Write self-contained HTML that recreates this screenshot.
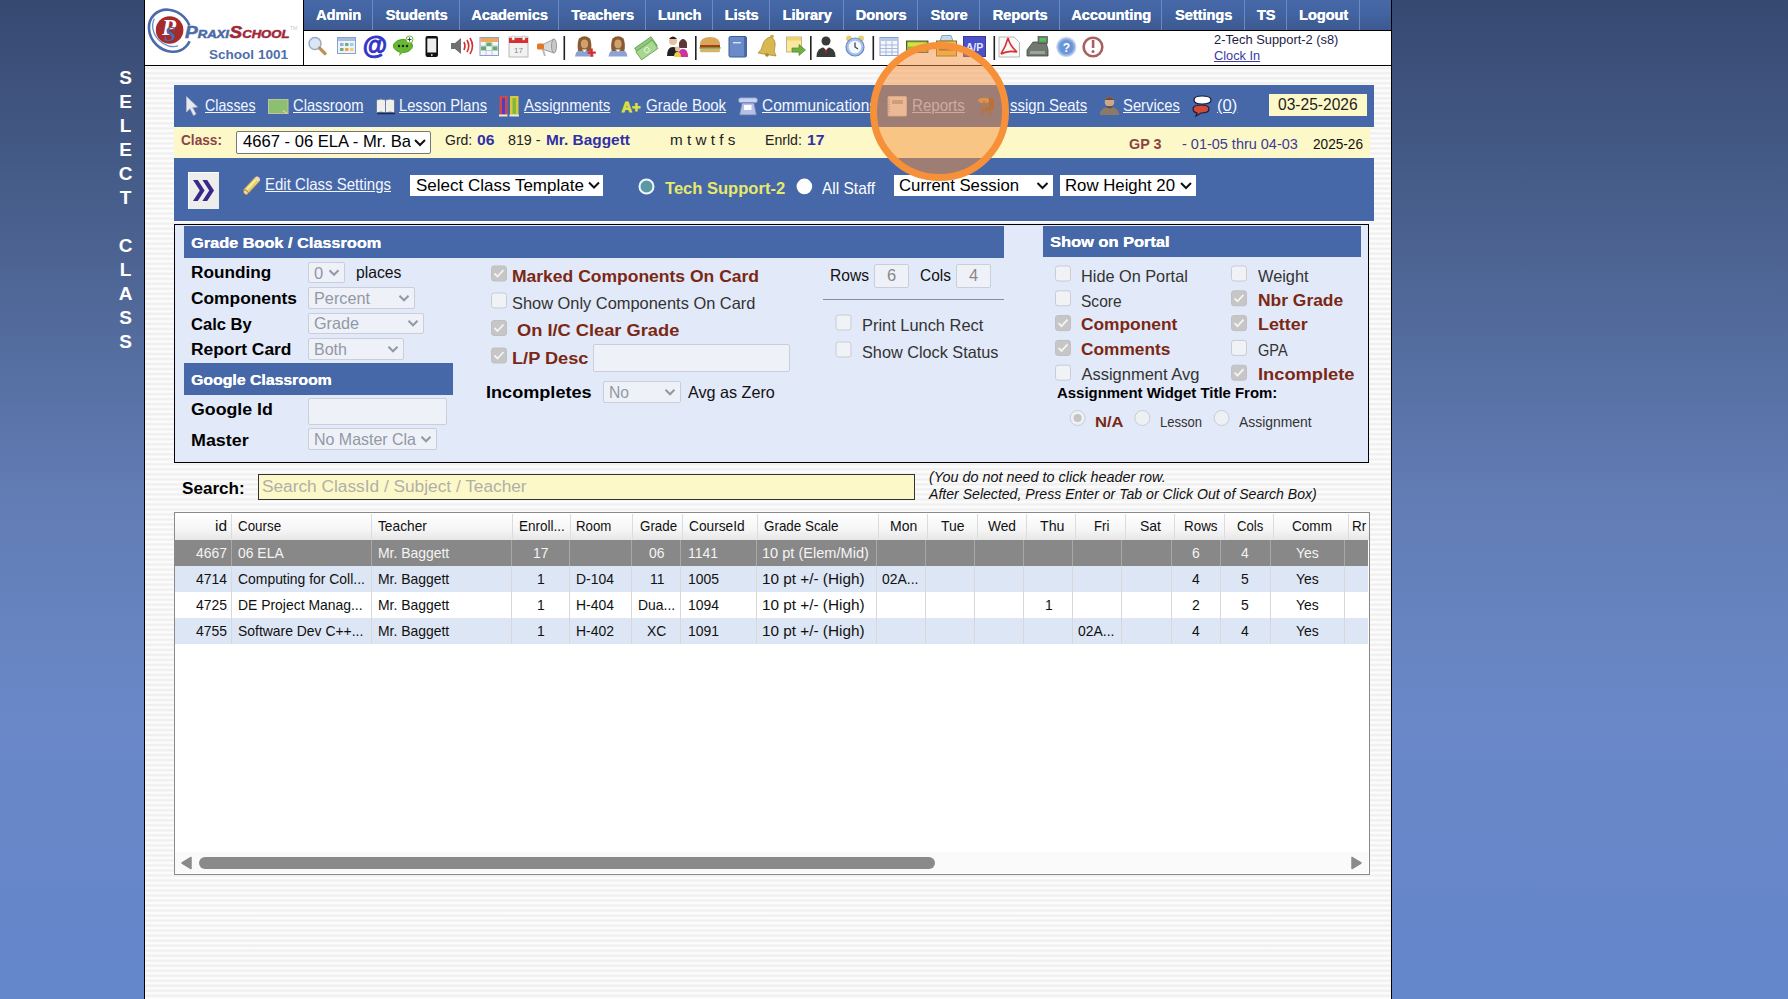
<!DOCTYPE html><html><head><meta charset="utf-8"><style>
*{box-sizing:border-box}
html,body{margin:0;padding:0}
body{width:1788px;height:999px;overflow:hidden;position:relative;font-family:"Liberation Sans",sans-serif;
 background:linear-gradient(to bottom,#364971 0%,#506898 30%,#627db5 50%,#6a88c8 72%,#6486cb 100%);}
.a{position:absolute}
.t{position:absolute;white-space:nowrap;line-height:1;transform-origin:0 0}
svg{position:absolute;left:0;top:0;overflow:visible}
</style></head><body>
<div class="a" style="left:144px;top:0px;width:1248px;height:999px;border-left:1px solid #000;border-right:1px solid #000;background:repeating-linear-gradient(to bottom,#fcfcfc 0px,#fcfcfc 1.01px,#f0f0f0 2.52px,#f0f0f0 3.52px,#fcfcfc 5.014px)"></div>
<div class="t" style="left:119.16px;top:67.92px;font-size:19px;color:#fff;font-weight:bold;">S</div>
<div class="t" style="left:119.16px;top:91.92px;font-size:19px;color:#fff;font-weight:bold;">E</div>
<div class="t" style="left:119.70px;top:115.92px;font-size:19px;color:#fff;font-weight:bold;">L</div>
<div class="t" style="left:119.16px;top:139.92px;font-size:19px;color:#fff;font-weight:bold;">E</div>
<div class="t" style="left:118.64px;top:163.92px;font-size:19px;color:#fff;font-weight:bold;">C</div>
<div class="t" style="left:119.70px;top:187.92px;font-size:19px;color:#fff;font-weight:bold;">T</div>
<div class="t" style="left:118.64px;top:235.92px;font-size:19px;color:#fff;font-weight:bold;">C</div>
<div class="t" style="left:119.70px;top:259.92px;font-size:19px;color:#fff;font-weight:bold;">L</div>
<div class="t" style="left:118.64px;top:283.92px;font-size:19px;color:#fff;font-weight:bold;">A</div>
<div class="t" style="left:119.16px;top:307.92px;font-size:19px;color:#fff;font-weight:bold;">S</div>
<div class="t" style="left:119.16px;top:331.92px;font-size:19px;color:#fff;font-weight:bold;">S</div>
<div class="a" style="left:145px;top:0px;width:1246px;height:65px;background:#fff"></div>
<div class="a" style="left:145px;top:65px;width:1246px;height:1px;background:#000"></div>
<div class="a" style="left:303px;top:0px;width:1px;height:65px;background:#000"></div>
<div class="a" style="left:304px;top:0px;width:1087px;height:30px;background:linear-gradient(to bottom,#4869a8 0%,#4263a0 50%,#3c598f 100%)"></div>
<div class="a" style="left:304px;top:30px;width:1087px;height:1px;background:#000"></div>
<div class="a" style="left:372px;top:0px;width:1px;height:30px;background:#6a8ac2"></div>
<div class="t" style="left:315.95px;top:7.73px;font-size:14.5px;color:#fff;font-weight:bold;text-shadow:0.4px 0 0 #fff;">Admin</div>
<div class="a" style="left:459px;top:0px;width:1px;height:30px;background:#6a8ac2"></div>
<div class="t" style="left:385.49px;top:7.73px;font-size:14.5px;color:#fff;font-weight:bold;text-shadow:0.4px 0 0 #fff;">Students</div>
<div class="a" style="left:558px;top:0px;width:1px;height:30px;background:#6a8ac2"></div>
<div class="t" style="left:471.21px;top:7.73px;font-size:14.5px;color:#fff;font-weight:bold;text-shadow:0.4px 0 0 #fff;">Academics</div>
<div class="a" style="left:645px;top:0px;width:1px;height:30px;background:#6a8ac2"></div>
<div class="t" style="left:571.20px;top:7.73px;font-size:14.5px;color:#fff;font-weight:bold;text-shadow:0.4px 0 0 #fff;">Teachers</div>
<div class="a" style="left:712px;top:0px;width:1px;height:30px;background:#6a8ac2"></div>
<div class="t" style="left:657.75px;top:7.73px;font-size:14.5px;color:#fff;font-weight:bold;text-shadow:0.4px 0 0 #fff;">Lunch</div>
<div class="a" style="left:769px;top:0px;width:1px;height:30px;background:#6a8ac2"></div>
<div class="t" style="left:724.58px;top:7.73px;font-size:14.5px;color:#fff;font-weight:bold;text-shadow:0.4px 0 0 #fff;">Lists</div>
<div class="a" style="left:843px;top:0px;width:1px;height:30px;background:#6a8ac2"></div>
<div class="t" style="left:782.42px;top:7.73px;font-size:14.5px;color:#fff;font-weight:bold;text-shadow:0.4px 0 0 #fff;">Library</div>
<div class="a" style="left:917px;top:0px;width:1px;height:30px;background:#6a8ac2"></div>
<div class="t" style="left:855.62px;top:7.73px;font-size:14.5px;color:#fff;font-weight:bold;text-shadow:0.4px 0 0 #fff;">Donors</div>
<div class="a" style="left:979px;top:0px;width:1px;height:30px;background:#6a8ac2"></div>
<div class="t" style="left:930.47px;top:7.73px;font-size:14.5px;color:#fff;font-weight:bold;text-shadow:0.4px 0 0 #fff;">Store</div>
<div class="a" style="left:1059px;top:0px;width:1px;height:30px;background:#6a8ac2"></div>
<div class="t" style="left:992.61px;top:7.73px;font-size:14.5px;color:#fff;font-weight:bold;text-shadow:0.4px 0 0 #fff;">Reports</div>
<div class="a" style="left:1161px;top:0px;width:1px;height:30px;background:#6a8ac2"></div>
<div class="t" style="left:1071.13px;top:7.73px;font-size:14.5px;color:#fff;font-weight:bold;text-shadow:0.4px 0 0 #fff;">Accounting</div>
<div class="a" style="left:1244px;top:0px;width:1px;height:30px;background:#6a8ac2"></div>
<div class="t" style="left:1174.90px;top:7.73px;font-size:14.5px;color:#fff;font-weight:bold;text-shadow:0.4px 0 0 #fff;">Settings</div>
<div class="a" style="left:1286px;top:0px;width:1px;height:30px;background:#6a8ac2"></div>
<div class="t" style="left:1256.74px;top:7.73px;font-size:14.5px;color:#fff;font-weight:bold;text-shadow:0.4px 0 0 #fff;">TS</div>
<div class="a" style="left:1359px;top:0px;width:1px;height:30px;background:#6a8ac2"></div>
<div class="t" style="left:1298.94px;top:7.73px;font-size:14.5px;color:#fff;font-weight:bold;text-shadow:0.4px 0 0 #fff;">Logout</div>
<div class="t" style="left:1214.30px;top:34.32px;font-size:12.5px;color:#1c1c48;transform:scaleX(1.0291);">2-Tech Support-2 (s8)</div>
<div class="t" style="left:1214.30px;top:49.72px;font-size:12.5px;color:#3a3aa0;transform:scaleX(1.0210);text-decoration:underline;">Clock In</div>
<div class="a" style="left:174px;top:85px;width:1200px;height:42px;background:#4668a8"></div>
<div class="t" style="left:205.20px;top:96.53px;font-size:16.5px;color:#f2f6ff;transform:scaleX(0.8605);text-decoration:underline;">Classes</div>
<div class="t" style="left:292.60px;top:96.53px;font-size:16.5px;color:#f2f6ff;transform:scaleX(0.8928);text-decoration:underline;">Classroom</div>
<div class="t" style="left:399.30px;top:96.53px;font-size:16.5px;color:#f2f6ff;transform:scaleX(0.8883);text-decoration:underline;">Lesson Plans</div>
<div class="t" style="left:523.50px;top:96.53px;font-size:16.5px;color:#f2f6ff;transform:scaleX(0.9136);text-decoration:underline;">Assignments</div>
<div class="t" style="left:646.20px;top:96.53px;font-size:16.5px;color:#f2f6ff;transform:scaleX(0.9097);text-decoration:underline;">Grade Book</div>
<div class="t" style="left:762.00px;top:96.53px;font-size:16.5px;color:#f2f6ff;transform:scaleX(0.9359);text-decoration:underline;">Communications</div>
<div class="t" style="left:1010.30px;top:96.53px;font-size:16.5px;color:#f2f6ff;transform:scaleX(0.9039);text-decoration:underline;">ssign Seats</div>
<div class="t" style="left:1123.20px;top:96.53px;font-size:16.5px;color:#f2f6ff;transform:scaleX(0.8978);text-decoration:underline;">Services</div>
<div class="t" style="left:1216.50px;top:96.53px;font-size:16.5px;color:#f2f6ff;transform:scaleX(1.0066);text-decoration:underline;">(0)</div>
<div class="t" style="left:911.70px;top:96.53px;font-size:16.5px;color:#a8c4f8;transform:scaleX(0.9139);text-decoration:underline;">Reports</div>
<div class="a" style="left:1269px;top:94px;width:98px;height:22px;background:#fdf8c8"></div>
<div class="t" style="left:1278.00px;top:95.93px;font-size:16.5px;color:#222;transform:scaleX(0.9431);">03-25-2026</div>
<div class="a" style="left:174px;top:127px;width:1196px;height:31px;background:#fdf8c8"></div>
<div class="t" style="left:181.30px;top:132.85px;font-size:14px;color:#8b4444;font-weight:bold;transform:scaleX(0.9757);">Class:</div>
<div class="a" style="left:236px;top:131px;width:195px;height:23px;background:#fff;border:1px solid #777;border-radius:2px"></div>
<div class="t" style="left:243.00px;top:133.41px;font-size:17px;color:#000;transform:scaleX(0.9768);overflow:hidden;">4667 - 06 ELA - Mr. Ba</div>
<div class="t" style="left:444.60px;top:132.73px;font-size:14.5px;color:#222;transform:scaleX(0.9645);">Grd:</div>
<div class="t" style="left:476.50px;top:132.73px;font-size:14.5px;color:#3030a8;font-weight:bold;transform:scaleX(1.0788);">06</div>
<div class="t" style="left:508.20px;top:132.73px;font-size:14.5px;color:#222;transform:scaleX(0.9834);">819 -</div>
<div class="t" style="left:545.80px;top:132.73px;font-size:14.5px;color:#3030a8;font-weight:bold;transform:scaleX(1.0627);">Mr. Baggett</div>
<div class="t" style="left:669.60px;top:132.73px;font-size:14.5px;color:#222;transform:scaleX(1.0527);">m t w t f s</div>
<div class="t" style="left:765.40px;top:132.73px;font-size:14.5px;color:#222;transform:scaleX(0.9742);">Enrld:</div>
<div class="t" style="left:807.00px;top:132.73px;font-size:14.5px;color:#3030a8;font-weight:bold;transform:scaleX(1.0912);">17</div>
<div class="t" style="left:1129.00px;top:136.53px;font-size:14.5px;color:#8b4444;font-weight:bold;transform:scaleX(0.9884);">GP 3</div>
<div class="t" style="left:1182.20px;top:136.53px;font-size:14.5px;color:#3a3a9a;transform:scaleX(0.9977);">- 01-05 thru 04-03</div>
<div class="t" style="left:1313.00px;top:136.53px;font-size:14.5px;color:#111;transform:scaleX(0.9396);">2025-26</div>
<div class="a" style="left:174px;top:158px;width:1200px;height:63px;background:#4668a8"></div>
<div class="a" style="left:188px;top:172px;width:31px;height:37px;background:#ededeb;border-top:1px solid #fafcff;border-left:1px solid #fafcff"></div>
<div class="t" style="left:265.00px;top:176.03px;font-size:16.5px;color:#f2f6ff;transform:scaleX(0.9099);text-decoration:underline;">Edit Class Settings</div>
<div class="a" style="left:410px;top:175px;width:193px;height:21px;background:#fff"></div>
<div class="t" style="left:416.00px;top:176.61px;font-size:17px;color:#000;">Select Class Template</div>
<div class="t" style="left:664.60px;top:180.21px;font-size:17px;color:#e8e86c;font-weight:bold;transform:scaleX(0.9732);">Tech Support-2</div>
<div class="t" style="left:821.90px;top:180.21px;font-size:17px;color:#fff;transform:scaleX(0.9112);">All Staff</div>
<div class="a" style="left:894px;top:175px;width:159px;height:21px;background:#fff"></div>
<div class="t" style="left:899.40px;top:177.11px;font-size:17px;color:#000;transform:scaleX(0.9845);">Current Session</div>
<div class="a" style="left:1060px;top:175px;width:136px;height:21px;background:#fff"></div>
<div class="t" style="left:1065.40px;top:177.11px;font-size:17px;color:#000;transform:scaleX(0.9865);">Row Height 20</div>
<div class="a" style="left:174px;top:224px;width:1195px;height:239px;border:1px solid #000;background:#e2e9f8"></div>
<div class="a" style="left:184px;top:226px;width:820px;height:32px;background:#4668a8"></div>
<div class="t" style="left:191.00px;top:235.38px;font-size:15.5px;color:#fff;font-weight:bold;transform:scaleX(1.0509);text-shadow:0.3px 0 0 #fff;">Grade Book / Classroom</div>
<div class="a" style="left:1043px;top:226px;width:318px;height:31px;background:#4668a8"></div>
<div class="t" style="left:1049.60px;top:234.38px;font-size:15.5px;color:#fff;font-weight:bold;transform:scaleX(1.0584);text-shadow:0.3px 0 0 #fff;">Show on Portal</div>
<div class="a" style="left:184px;top:363px;width:269px;height:32px;background:#4668a8"></div>
<div class="t" style="left:191.00px;top:372.38px;font-size:15.5px;color:#fff;font-weight:bold;transform:scaleX(1.0203);text-shadow:0.3px 0 0 #fff;">Google Classroom</div>
<div class="t" style="left:191.40px;top:265.26px;font-size:16px;color:#000;font-weight:bold;transform:scaleX(1.0745);">Rounding</div>
<div class="t" style="left:191.40px;top:291.06px;font-size:16px;color:#000;font-weight:bold;transform:scaleX(1.0841);">Components</div>
<div class="t" style="left:191.40px;top:316.76px;font-size:16px;color:#000;font-weight:bold;transform:scaleX(1.0359);">Calc By</div>
<div class="t" style="left:191.40px;top:341.86px;font-size:16px;color:#000;font-weight:bold;transform:scaleX(1.0870);">Report Card</div>
<div class="t" style="left:191.40px;top:402.26px;font-size:16px;color:#000;font-weight:bold;transform:scaleX(1.1102);">Google Id</div>
<div class="t" style="left:191.40px;top:432.56px;font-size:16px;color:#000;font-weight:bold;transform:scaleX(1.1167);">Master</div>
<div class="a" style="left:308px;top:262px;width:37px;height:21px;background:#eef1f8;border:1px solid #c9ceda;border-radius:2px"></div>
<div class="t" style="left:314.00px;top:264.53px;font-size:16.5px;color:#9298a6;">0</div>
<div class="t" style="left:356.00px;top:263.73px;font-size:16.5px;color:#111;transform:scaleX(0.9519);">places</div>
<div class="a" style="left:308px;top:287px;width:107px;height:22px;background:#eef1f8;border:1px solid #c9ceda;border-radius:2px"></div>
<div class="t" style="left:314.00px;top:289.83px;font-size:16.5px;color:#9298a6;transform:scaleX(0.9848);">Percent</div>
<div class="a" style="left:308px;top:313px;width:116px;height:21px;background:#eef1f8;border:1px solid #c9ceda;border-radius:2px"></div>
<div class="t" style="left:314.00px;top:315.03px;font-size:16.5px;color:#9298a6;transform:scaleX(0.9813);">Grade</div>
<div class="a" style="left:308px;top:338px;width:96px;height:22px;background:#eef1f8;border:1px solid #c9ceda;border-radius:2px"></div>
<div class="t" style="left:314.00px;top:340.53px;font-size:16.5px;color:#9298a6;transform:scaleX(0.9722);">Both</div>
<div class="a" style="left:308px;top:398px;width:139px;height:27px;background:#eef1f8;border:1px solid #c9ceda;border-radius:2px"></div>
<div class="a" style="left:308px;top:428px;width:129px;height:22px;background:#eef1f8;border:1px solid #c9ceda;border-radius:2px"></div>
<div class="t" style="left:314.00px;top:430.53px;font-size:16.5px;color:#9298a6;transform:scaleX(0.9673);">No Master Cla</div>
<div class="t" style="left:512.20px;top:269.06px;font-size:16px;color:#7a2814;font-weight:bold;transform:scaleX(1.0939);">Marked Components On Card</div>
<div class="t" style="left:511.90px;top:295.13px;font-size:16.5px;color:#333;transform:scaleX(0.9940);">Show Only Components On Card</div>
<div class="t" style="left:516.70px;top:322.76px;font-size:16px;color:#7a2814;font-weight:bold;transform:scaleX(1.1408);">On I/C Clear Grade</div>
<div class="t" style="left:511.90px;top:350.86px;font-size:16px;color:#7a2814;font-weight:bold;transform:scaleX(1.1353);">L/P Desc</div>
<div class="a" style="left:593px;top:344px;width:197px;height:28px;background:#eef1f8;border:1px solid #c9ceda;border-radius:2px"></div>
<div class="t" style="left:486.30px;top:385.26px;font-size:16px;color:#000;font-weight:bold;transform:scaleX(1.1311);">Incompletes</div>
<div class="a" style="left:603px;top:381px;width:78px;height:22px;background:#eef1f8;border:1px solid #c9ceda;border-radius:2px"></div>
<div class="t" style="left:609.00px;top:384.03px;font-size:16.5px;color:#9298a6;transform:scaleX(0.9482);">No</div>
<div class="t" style="left:687.60px;top:384.03px;font-size:16.5px;color:#111;transform:scaleX(0.9791);">Avg as Zero</div>
<div class="t" style="left:830.00px;top:266.63px;font-size:16.5px;color:#111;transform:scaleX(0.9477);">Rows</div>
<div class="a" style="left:874px;top:264px;width:35px;height:24px;background:#eef1f8;border:1px solid #c9ceda;border-radius:2px"></div>
<div class="t" style="left:886.91px;top:267.03px;font-size:16.5px;color:#888;">6</div>
<div class="t" style="left:920.00px;top:266.63px;font-size:16.5px;color:#111;transform:scaleX(0.9361);">Cols</div>
<div class="a" style="left:956px;top:264px;width:35px;height:24px;background:#eef1f8;border:1px solid #c9ceda;border-radius:2px"></div>
<div class="t" style="left:968.91px;top:267.03px;font-size:16.5px;color:#888;">4</div>
<div class="a" style="left:823px;top:299px;width:181px;height:1px;background:#8a8f99"></div>
<div class="t" style="left:861.60px;top:317.03px;font-size:16.5px;color:#333;transform:scaleX(0.9944);">Print Lunch Rect</div>
<div class="t" style="left:861.60px;top:343.73px;font-size:16.5px;color:#333;transform:scaleX(0.9850);">Show Clock Status</div>
<div class="t" style="left:1081.40px;top:268.03px;font-size:16.5px;color:#333;transform:scaleX(0.9869);">Hide On Portal</div>
<div class="t" style="left:1081.40px;top:293.03px;font-size:16.5px;color:#333;transform:scaleX(0.9419);">Score</div>
<div class="t" style="left:1081.40px;top:317.06px;font-size:16px;color:#7a2814;font-weight:bold;transform:scaleX(1.0835);">Component</div>
<div class="t" style="left:1081.40px;top:342.16px;font-size:16px;color:#7a2814;font-weight:bold;transform:scaleX(1.0801);">Comments</div>
<div class="t" style="left:1081.40px;top:366.23px;font-size:16.5px;color:#333;">Assignment Avg</div>
<div class="t" style="left:1257.80px;top:268.03px;font-size:16.5px;color:#333;transform:scaleX(0.9911);">Weight</div>
<div class="t" style="left:1257.80px;top:293.46px;font-size:16px;color:#7a2814;font-weight:bold;transform:scaleX(1.0889);">Nbr Grade</div>
<div class="t" style="left:1257.80px;top:317.06px;font-size:16px;color:#7a2814;font-weight:bold;transform:scaleX(1.1158);">Letter</div>
<div class="t" style="left:1257.80px;top:341.73px;font-size:16.5px;color:#333;transform:scaleX(0.8804);">GPA</div>
<div class="t" style="left:1257.80px;top:366.66px;font-size:16px;color:#7a2814;font-weight:bold;transform:scaleX(1.1414);">Incomplete</div>
<div class="t" style="left:1057.00px;top:386.35px;font-size:14px;color:#000;font-weight:bold;transform:scaleX(1.0668);">Assignment Widget Title From:</div>
<div class="t" style="left:1094.60px;top:414.65px;font-size:14px;color:#7a2814;font-weight:bold;transform:scaleX(1.1862);">N/A</div>
<div class="t" style="left:1160.20px;top:414.65px;font-size:14px;color:#333;transform:scaleX(0.9326);">Lesson</div>
<div class="t" style="left:1239.00px;top:414.65px;font-size:14px;color:#333;transform:scaleX(0.9925);">Assignment</div>
<div class="t" style="left:181.80px;top:479.63px;font-size:16.5px;color:#000;font-weight:bold;transform:scaleX(1.0359);">Search:</div>
<div class="a" style="left:258px;top:474px;width:657px;height:26px;background:#fdf8c8;border:1px solid #333"></div>
<div class="t" style="left:262.40px;top:479.26px;font-size:16px;color:#b0b0a8;transform:scaleX(1.0793);">Search ClassId / Subject / Teacher</div>
<div class="t" style="left:929.00px;top:469.83px;font-size:14.5px;color:#111;font-style:italic;transform:scaleX(0.9920);">(You do not need to click header row.</div>
<div class="t" style="left:929.00px;top:486.73px;font-size:14.5px;color:#111;font-style:italic;transform:scaleX(0.9712);">After Selected, Press Enter or Tab or Click Out of Search Box)</div>
<div class="a" style="left:174px;top:512px;width:1196px;height:363px;border:1px solid #8a8a8a;background:#fff"></div>
<div class="a" style="left:175px;top:513px;width:1194px;height:27px;background:linear-gradient(to bottom,#ffffff 0%,#f6f6f6 60%,#e6e6e6 100%)"></div>
<div class="a" style="left:231px;top:514px;width:1px;height:25px;background:#dcdcdc"></div>
<div class="a" style="left:371px;top:514px;width:1px;height:25px;background:#dcdcdc"></div>
<div class="a" style="left:512px;top:514px;width:1px;height:25px;background:#dcdcdc"></div>
<div class="a" style="left:570px;top:514px;width:1px;height:25px;background:#dcdcdc"></div>
<div class="a" style="left:632px;top:514px;width:1px;height:25px;background:#dcdcdc"></div>
<div class="a" style="left:682px;top:514px;width:1px;height:25px;background:#dcdcdc"></div>
<div class="a" style="left:757px;top:514px;width:1px;height:25px;background:#dcdcdc"></div>
<div class="a" style="left:878px;top:514px;width:1px;height:25px;background:#dcdcdc"></div>
<div class="a" style="left:927px;top:514px;width:1px;height:25px;background:#dcdcdc"></div>
<div class="a" style="left:977px;top:514px;width:1px;height:25px;background:#dcdcdc"></div>
<div class="a" style="left:1026px;top:514px;width:1px;height:25px;background:#dcdcdc"></div>
<div class="a" style="left:1075px;top:514px;width:1px;height:25px;background:#dcdcdc"></div>
<div class="a" style="left:1125px;top:514px;width:1px;height:25px;background:#dcdcdc"></div>
<div class="a" style="left:1174px;top:514px;width:1px;height:25px;background:#dcdcdc"></div>
<div class="a" style="left:1224px;top:514px;width:1px;height:25px;background:#dcdcdc"></div>
<div class="a" style="left:1273px;top:514px;width:1px;height:25px;background:#dcdcdc"></div>
<div class="a" style="left:1348px;top:514px;width:1px;height:25px;background:#dcdcdc"></div>
<div class="a" style="left:175px;top:540px;width:1193px;height:26px;background:#888888"></div>
<div class="a" style="left:175px;top:566px;width:1193px;height:26px;background:#dde6f4"></div>
<div class="a" style="left:175px;top:592px;width:1193px;height:26px;background:#ffffff"></div>
<div class="a" style="left:175px;top:618px;width:1193px;height:26px;background:#dde6f4"></div>
<div class="a" style="left:231px;top:540px;width:1px;height:104px;background:#d8d8d8"></div>
<div class="a" style="left:371px;top:540px;width:1px;height:104px;background:#d8d8d8"></div>
<div class="a" style="left:511px;top:540px;width:1px;height:104px;background:#d8d8d8"></div>
<div class="a" style="left:569px;top:540px;width:1px;height:104px;background:#d8d8d8"></div>
<div class="a" style="left:631px;top:540px;width:1px;height:104px;background:#d8d8d8"></div>
<div class="a" style="left:680px;top:540px;width:1px;height:104px;background:#d8d8d8"></div>
<div class="a" style="left:756px;top:540px;width:1px;height:104px;background:#d8d8d8"></div>
<div class="a" style="left:876px;top:540px;width:1px;height:104px;background:#d8d8d8"></div>
<div class="a" style="left:925px;top:540px;width:1px;height:104px;background:#d8d8d8"></div>
<div class="a" style="left:974px;top:540px;width:1px;height:104px;background:#d8d8d8"></div>
<div class="a" style="left:1023px;top:540px;width:1px;height:104px;background:#d8d8d8"></div>
<div class="a" style="left:1072px;top:540px;width:1px;height:104px;background:#d8d8d8"></div>
<div class="a" style="left:1121px;top:540px;width:1px;height:104px;background:#d8d8d8"></div>
<div class="a" style="left:1171px;top:540px;width:1px;height:104px;background:#d8d8d8"></div>
<div class="a" style="left:1220px;top:540px;width:1px;height:104px;background:#d8d8d8"></div>
<div class="a" style="left:1270px;top:540px;width:1px;height:104px;background:#d8d8d8"></div>
<div class="a" style="left:1344px;top:540px;width:1px;height:104px;background:#d8d8d8"></div>
<div class="a" style="left:231px;top:540px;width:1px;height:26px;background:#a8a8a8"></div>
<div class="a" style="left:371px;top:540px;width:1px;height:26px;background:#a8a8a8"></div>
<div class="a" style="left:511px;top:540px;width:1px;height:26px;background:#a8a8a8"></div>
<div class="a" style="left:569px;top:540px;width:1px;height:26px;background:#a8a8a8"></div>
<div class="a" style="left:631px;top:540px;width:1px;height:26px;background:#a8a8a8"></div>
<div class="a" style="left:680px;top:540px;width:1px;height:26px;background:#a8a8a8"></div>
<div class="a" style="left:756px;top:540px;width:1px;height:26px;background:#a8a8a8"></div>
<div class="a" style="left:876px;top:540px;width:1px;height:26px;background:#a8a8a8"></div>
<div class="a" style="left:925px;top:540px;width:1px;height:26px;background:#a8a8a8"></div>
<div class="a" style="left:974px;top:540px;width:1px;height:26px;background:#a8a8a8"></div>
<div class="a" style="left:1023px;top:540px;width:1px;height:26px;background:#a8a8a8"></div>
<div class="a" style="left:1072px;top:540px;width:1px;height:26px;background:#a8a8a8"></div>
<div class="a" style="left:1121px;top:540px;width:1px;height:26px;background:#a8a8a8"></div>
<div class="a" style="left:1171px;top:540px;width:1px;height:26px;background:#a8a8a8"></div>
<div class="a" style="left:1220px;top:540px;width:1px;height:26px;background:#a8a8a8"></div>
<div class="a" style="left:1270px;top:540px;width:1px;height:26px;background:#a8a8a8"></div>
<div class="a" style="left:1344px;top:540px;width:1px;height:26px;background:#a8a8a8"></div>
<div class="t" style="left:237.60px;top:518.93px;font-size:14.5px;color:#111;transform:scaleX(0.9221);">Course</div>
<div class="t" style="left:377.60px;top:518.93px;font-size:14.5px;color:#111;transform:scaleX(0.9479);">Teacher</div>
<div class="t" style="left:518.50px;top:518.93px;font-size:14.5px;color:#111;transform:scaleX(0.9317);">Enroll...</div>
<div class="t" style="left:576.30px;top:518.93px;font-size:14.5px;color:#111;transform:scaleX(0.9152);">Room</div>
<div class="t" style="left:639.60px;top:518.93px;font-size:14.5px;color:#111;transform:scaleX(0.9206);">Grade</div>
<div class="t" style="left:688.70px;top:518.93px;font-size:14.5px;color:#111;transform:scaleX(0.9450);">CourseId</div>
<div class="t" style="left:763.50px;top:518.93px;font-size:14.5px;color:#111;transform:scaleX(0.9243);">Grade Scale</div>
<div class="t" style="left:890.00px;top:518.93px;font-size:14.5px;color:#111;transform:scaleX(0.9678);">Mon</div>
<div class="t" style="left:941.00px;top:518.93px;font-size:14.5px;color:#111;transform:scaleX(0.9612);">Tue</div>
<div class="t" style="left:988.00px;top:518.93px;font-size:14.5px;color:#111;transform:scaleX(0.9475);">Wed</div>
<div class="t" style="left:1040.00px;top:518.93px;font-size:14.5px;color:#111;transform:scaleX(0.9806);">Thu</div>
<div class="t" style="left:1093.60px;top:518.93px;font-size:14.5px;color:#111;transform:scaleX(0.9108);">Fri</div>
<div class="t" style="left:1140.00px;top:518.93px;font-size:14.5px;color:#111;transform:scaleX(0.9649);">Sat</div>
<div class="t" style="left:1183.50px;top:518.93px;font-size:14.5px;color:#111;transform:scaleX(0.9240);">Rows</div>
<div class="t" style="left:1236.50px;top:518.93px;font-size:14.5px;color:#111;transform:scaleX(0.9032);">Cols</div>
<div class="t" style="left:1291.80px;top:518.93px;font-size:14.5px;color:#111;transform:scaleX(0.9369);">Comm</div>
<div class="t" style="left:1351.80px;top:518.93px;font-size:14.5px;color:#111;transform:scaleX(0.9281);">Rr</div>
<div class="t" style="left:214.50px;top:518.93px;font-size:14.5px;color:#111;transform:scaleX(1.0633);">id</div>
<div class="t" style="left:195.53px;top:545.73px;font-size:14.5px;color:#f4f4f4;transform:scaleX(0.9600);">4667</div>
<div class="t" style="left:237.60px;top:545.73px;font-size:14.5px;color:#f4f4f4;transform:scaleX(0.9600);">06 ELA</div>
<div class="t" style="left:377.60px;top:545.73px;font-size:14.5px;color:#f4f4f4;transform:scaleX(0.9600);">Mr. Baggett</div>
<div class="t" style="left:533.26px;top:545.73px;font-size:14.5px;color:#f4f4f4;transform:scaleX(0.9600);">17</div>
<div class="t" style="left:649.26px;top:545.73px;font-size:14.5px;color:#f4f4f4;transform:scaleX(0.9600);">06</div>
<div class="t" style="left:687.60px;top:545.73px;font-size:14.5px;color:#f4f4f4;transform:scaleX(0.9600);">1141</div>
<div class="t" style="left:761.70px;top:545.73px;font-size:14.5px;color:#f4f4f4;transform:scaleX(1.0050);">10 pt (Elem/Mid)</div>
<div class="t" style="left:1192.13px;top:545.73px;font-size:14.5px;color:#f4f4f4;transform:scaleX(0.9600);">6</div>
<div class="t" style="left:1241.13px;top:545.73px;font-size:14.5px;color:#f4f4f4;transform:scaleX(0.9600);">4</div>
<div class="t" style="left:1296.15px;top:545.73px;font-size:14.5px;color:#f4f4f4;transform:scaleX(0.9600);">Yes</div>
<div class="t" style="left:195.53px;top:571.73px;font-size:14.5px;color:#111;transform:scaleX(0.9600);">4714</div>
<div class="t" style="left:237.60px;top:571.73px;font-size:14.5px;color:#111;transform:scaleX(0.9600);">Computing for Coll...</div>
<div class="t" style="left:377.60px;top:571.73px;font-size:14.5px;color:#111;transform:scaleX(0.9600);">Mr. Baggett</div>
<div class="t" style="left:537.13px;top:571.73px;font-size:14.5px;color:#111;transform:scaleX(0.9600);">1</div>
<div class="t" style="left:575.90px;top:571.73px;font-size:14.5px;color:#111;transform:scaleX(0.9600);">D-104</div>
<div class="t" style="left:649.77px;top:571.73px;font-size:14.5px;color:#111;transform:scaleX(0.9600);">11</div>
<div class="t" style="left:687.60px;top:571.73px;font-size:14.5px;color:#111;transform:scaleX(0.9600);">1005</div>
<div class="t" style="left:761.70px;top:571.73px;font-size:14.5px;color:#111;transform:scaleX(1.0555);">10 pt +/- (High)</div>
<div class="t" style="left:881.60px;top:571.73px;font-size:14.5px;color:#111;transform:scaleX(0.9600);">02A...</div>
<div class="t" style="left:1192.13px;top:571.73px;font-size:14.5px;color:#111;transform:scaleX(0.9600);">4</div>
<div class="t" style="left:1241.13px;top:571.73px;font-size:14.5px;color:#111;transform:scaleX(0.9600);">5</div>
<div class="t" style="left:1296.15px;top:571.73px;font-size:14.5px;color:#111;transform:scaleX(0.9600);">Yes</div>
<div class="t" style="left:195.53px;top:597.73px;font-size:14.5px;color:#111;transform:scaleX(0.9600);">4725</div>
<div class="t" style="left:237.60px;top:597.73px;font-size:14.5px;color:#111;transform:scaleX(0.9600);">DE Project Manag...</div>
<div class="t" style="left:377.60px;top:597.73px;font-size:14.5px;color:#111;transform:scaleX(0.9600);">Mr. Baggett</div>
<div class="t" style="left:537.13px;top:597.73px;font-size:14.5px;color:#111;transform:scaleX(0.9600);">1</div>
<div class="t" style="left:575.90px;top:597.73px;font-size:14.5px;color:#111;transform:scaleX(0.9600);">H-404</div>
<div class="t" style="left:638.43px;top:597.73px;font-size:14.5px;color:#111;transform:scaleX(0.9600);">Dua...</div>
<div class="t" style="left:687.60px;top:597.73px;font-size:14.5px;color:#111;transform:scaleX(0.9600);">1094</div>
<div class="t" style="left:761.70px;top:597.73px;font-size:14.5px;color:#111;transform:scaleX(1.0555);">10 pt +/- (High)</div>
<div class="t" style="left:1045.13px;top:597.73px;font-size:14.5px;color:#111;transform:scaleX(0.9600);">1</div>
<div class="t" style="left:1192.13px;top:597.73px;font-size:14.5px;color:#111;transform:scaleX(0.9600);">2</div>
<div class="t" style="left:1241.13px;top:597.73px;font-size:14.5px;color:#111;transform:scaleX(0.9600);">5</div>
<div class="t" style="left:1296.15px;top:597.73px;font-size:14.5px;color:#111;transform:scaleX(0.9600);">Yes</div>
<div class="t" style="left:195.53px;top:623.73px;font-size:14.5px;color:#111;transform:scaleX(0.9600);">4755</div>
<div class="t" style="left:237.60px;top:623.73px;font-size:14.5px;color:#111;transform:scaleX(0.9600);">Software Dev C++...</div>
<div class="t" style="left:377.60px;top:623.73px;font-size:14.5px;color:#111;transform:scaleX(0.9600);">Mr. Baggett</div>
<div class="t" style="left:537.13px;top:623.73px;font-size:14.5px;color:#111;transform:scaleX(0.9600);">1</div>
<div class="t" style="left:575.90px;top:623.73px;font-size:14.5px;color:#111;transform:scaleX(0.9600);">H-402</div>
<div class="t" style="left:647.33px;top:623.73px;font-size:14.5px;color:#111;transform:scaleX(0.9600);">XC</div>
<div class="t" style="left:687.60px;top:623.73px;font-size:14.5px;color:#111;transform:scaleX(0.9600);">1091</div>
<div class="t" style="left:761.70px;top:623.73px;font-size:14.5px;color:#111;transform:scaleX(1.0555);">10 pt +/- (High)</div>
<div class="t" style="left:1078.40px;top:623.73px;font-size:14.5px;color:#111;transform:scaleX(0.9600);">02A...</div>
<div class="t" style="left:1192.13px;top:623.73px;font-size:14.5px;color:#111;transform:scaleX(0.9600);">4</div>
<div class="t" style="left:1241.13px;top:623.73px;font-size:14.5px;color:#111;transform:scaleX(0.9600);">4</div>
<div class="t" style="left:1296.15px;top:623.73px;font-size:14.5px;color:#111;transform:scaleX(0.9600);">Yes</div>
<div class="a" style="left:175px;top:852px;width:1193px;height:21px;background:#fafafa"></div>
<div class="a" style="left:199px;top:857px;width:736px;height:12px;background:#8a8a8a;border-radius:6px"></div>
<svg width="1788" height="999"><path d="M182 863 L191 857.5 L191 868.5 Z" fill="#8a8a8a" stroke="#8a8a8a" stroke-width="1.5" stroke-linejoin="round"/><path d="M1361 863 L1352 857.5 L1352 868.5 Z" fill="#8a8a8a" stroke="#8a8a8a" stroke-width="1.5" stroke-linejoin="round"/></svg>
<svg width="1788" height="999"><rect x="491.5" y="266.0" width="15" height="15" rx="2.5" fill="#c6c6c6" stroke="#c0c0c0"/><path d="M494.5 273.5 L497.5 276.5 L503.5 270.0" fill="none" stroke="#f4f4f4" stroke-width="1.8"/><rect x="491.5" y="293.0" width="15" height="15" rx="2.5" fill="#f0f2f6" stroke="#c8ccd4"/><rect x="491.5" y="320.5" width="15" height="15" rx="2.5" fill="#c6c6c6" stroke="#c0c0c0"/><path d="M494.5 328 L497.5 331 L503.5 324.5" fill="none" stroke="#f4f4f4" stroke-width="1.8"/><rect x="491.5" y="348.0" width="15" height="15" rx="2.5" fill="#c6c6c6" stroke="#c0c0c0"/><path d="M494.5 355.5 L497.5 358.5 L503.5 352.0" fill="none" stroke="#f4f4f4" stroke-width="1.8"/><rect x="836.0" y="315.0" width="15" height="15" rx="2.5" fill="#f0f2f6" stroke="#c8ccd4"/><rect x="836.0" y="342.0" width="15" height="15" rx="2.5" fill="#f0f2f6" stroke="#c8ccd4"/><rect x="1055.5" y="266.0" width="15" height="15" rx="2.5" fill="#f0f2f6" stroke="#c8ccd4"/><rect x="1055.5" y="290.8" width="15" height="15" rx="2.5" fill="#f0f2f6" stroke="#c8ccd4"/><rect x="1055.5" y="315.6" width="15" height="15" rx="2.5" fill="#c6c6c6" stroke="#c0c0c0"/><path d="M1058.5 323.1 L1061.5 326.1 L1067.5 319.6" fill="none" stroke="#f4f4f4" stroke-width="1.8"/><rect x="1055.5" y="340.4" width="15" height="15" rx="2.5" fill="#c6c6c6" stroke="#c0c0c0"/><path d="M1058.5 347.9 L1061.5 350.9 L1067.5 344.4" fill="none" stroke="#f4f4f4" stroke-width="1.8"/><rect x="1055.5" y="365.2" width="15" height="15" rx="2.5" fill="#f0f2f6" stroke="#c8ccd4"/><rect x="1231.5" y="266.0" width="15" height="15" rx="2.5" fill="#f0f2f6" stroke="#c8ccd4"/><rect x="1231.5" y="290.8" width="15" height="15" rx="2.5" fill="#c6c6c6" stroke="#c0c0c0"/><path d="M1234.5 298.3 L1237.5 301.3 L1243.5 294.8" fill="none" stroke="#f4f4f4" stroke-width="1.8"/><rect x="1231.5" y="315.6" width="15" height="15" rx="2.5" fill="#c6c6c6" stroke="#c0c0c0"/><path d="M1234.5 323.1 L1237.5 326.1 L1243.5 319.6" fill="none" stroke="#f4f4f4" stroke-width="1.8"/><rect x="1231.5" y="340.4" width="15" height="15" rx="2.5" fill="#f0f2f6" stroke="#c8ccd4"/><rect x="1231.5" y="365.2" width="15" height="15" rx="2.5" fill="#c6c6c6" stroke="#c0c0c0"/><path d="M1234.5 372.7 L1237.5 375.7 L1243.5 369.2" fill="none" stroke="#f4f4f4" stroke-width="1.8"/><circle cx="1077.6" cy="418" r="7.5" fill="#eef0f4" stroke="#c8ccd4"/><circle cx="1077.6" cy="418" r="4" fill="#c4c4c4"/><circle cx="1142.4" cy="418" r="7.5" fill="#eef0f4" stroke="#c8ccd4"/><circle cx="1221.6" cy="418" r="7.5" fill="#eef0f4" stroke="#c8ccd4"/><circle cx="646.5" cy="186.5" r="7" fill="#5b9aa2" stroke="#f0f6ff" stroke-width="2"/><circle cx="804.4" cy="186.4" r="7.8" fill="#ffffff"/><path d="M415 140.0 L420 145.0 L425 140.0" fill="none" stroke="#111" stroke-width="2"/><path d="M589 182.5 L594 187.5 L599 182.5" fill="none" stroke="#111" stroke-width="2"/><path d="M1037.5 183.0 L1042.5 188.0 L1047.5 183.0" fill="none" stroke="#111" stroke-width="2"/><path d="M1181 183.0 L1186 188.0 L1191 183.0" fill="none" stroke="#111" stroke-width="2"/><path d="M329.5 270.25 L334 274.75 L338.5 270.25" fill="none" stroke="#9298a6" stroke-width="2"/><path d="M399.5 295.75 L404 300.25 L408.5 295.75" fill="none" stroke="#9298a6" stroke-width="2"/><path d="M408.5 320.75 L413 325.25 L417.5 320.75" fill="none" stroke="#9298a6" stroke-width="2"/><path d="M388.5 346.75 L393 351.25 L397.5 346.75" fill="none" stroke="#9298a6" stroke-width="2"/><path d="M421.5 436.75 L426 441.25 L430.5 436.75" fill="none" stroke="#9298a6" stroke-width="2"/><path d="M665.5 389.75 L670 394.25 L674.5 389.75" fill="none" stroke="#9298a6" stroke-width="2"/><path d="M193 180 L197.8 180 L204.6 190.5 L197.8 201 L193 201 L199.8 190.5 Z M202.4 180 L207.2 180 L214 190.5 L207.2 201 L202.4 201 L209.2 190.5 Z" fill="#38288c"/><g transform="translate(251.5,185.5) rotate(-47)"><rect x="-10.5" y="-3" width="21" height="6" rx="3" fill="#e6cf6a" stroke="#b89a40" stroke-width="0.6"/><rect x="-6" y="-1.8" width="13" height="2" fill="#f6eea8"/><ellipse cx="9" cy="0" rx="2" ry="2.6" fill="#f2d8c0"/><ellipse cx="-9" cy="0.5" rx="2" ry="2.8" fill="#e8d8a0" stroke="#605030" stroke-width="0.5"/></g></svg>
<svg width="1788" height="999"><circle cx="315" cy="43.5" r="6" fill="#d8e6f8" stroke="#98acc8" stroke-width="1.5"/><path d="M319.5 48 L325 53.5" stroke="#c0905a" stroke-width="3.2" stroke-linecap="round"/><rect x="337.5" y="37.5" width="18" height="16" fill="#eef2fa" stroke="#8aa0c8"/><rect x="338" y="38" width="17" height="3" fill="#a8bce0"/><rect x="340" y="43" width="3.5" height="3" fill="#8fb0e0"/><rect x="345" y="43" width="3.5" height="3" fill="#70b070"/><rect x="350" y="43" width="3.5" height="3" fill="#a0c8f0"/><rect x="340" y="48" width="3.5" height="3" fill="#70b070"/><rect x="345" y="48" width="3.5" height="3" fill="#f0a050"/><rect x="350" y="48" width="3.5" height="3" fill="#f0d070"/><text x="375" y="54" font-family="Liberation Sans" font-weight="bold" font-size="25" fill="#3434c8" stroke="#3434c8" stroke-width="0.9" text-anchor="middle">@</text><ellipse cx="403" cy="46" rx="9.5" ry="6.5" fill="#68b830" stroke="#4a9a20"/><path d="M400 51 L399 56 L405 51 Z" fill="#68b830"/><circle cx="399" cy="46" r="1.2" fill="#223"/><circle cx="403" cy="46" r="1.2" fill="#223"/><circle cx="407" cy="46" r="1.2" fill="#223"/><circle cx="409.5" cy="39.5" r="3.5" fill="#fff" stroke="#68b830"/><path d="M409.5 37.5 V41.5 M407.5 39.5 H411.5" stroke="#333" stroke-width="0.9"/><rect x="425.5" y="36" width="12.5" height="21" rx="2" fill="#111"/><rect x="427.3" y="38.5" width="9" height="14" fill="#eee"/><circle cx="431.8" cy="55" r="0.9" fill="#ddd"/><path d="M451 43 H455 L461 38 V54 L455 49 H451 Z" fill="#707070"/><path d="M464 42 Q466 46 464 50 M467 40 Q470.5 46 467 52 M470 38 Q475 46 470 54" fill="none" stroke="#d03030" stroke-width="1.6"/><rect x="480" y="37.5" width="18.5" height="18" fill="#f4f6fa" stroke="#8aa0c8"/><rect x="480.5" y="38" width="17.5" height="4" fill="#f0a860"/><path d="M480 46 H498 M480 50.5 H498 M486 42 V55 M492 42 V55" stroke="#b0c0d8" stroke-width="0.8"/><rect x="486.5" y="42.5" width="5" height="3.5" fill="#60b060"/><rect x="492.5" y="46.5" width="5" height="3.5" fill="#60b060"/><rect x="481" y="46.5" width="5" height="3.5" fill="#60b060"/><rect x="509" y="37" width="19" height="20" fill="#f2f2f2" stroke="#b8b8b8"/><rect x="509" y="38" width="19" height="5" fill="#d83030"/><rect x="512" y="36" width="2.5" height="4" fill="#fff" stroke="#aaa" stroke-width="0.5"/><rect x="522.5" y="36" width="2.5" height="4" fill="#fff" stroke="#aaa" stroke-width="0.5"/><text x="518.5" y="53" font-family="Liberation Sans" font-size="8" fill="#888" text-anchor="middle">17</text><path d="M542 45 L554 39 V53 L542 49 Z" fill="#d8d8d8" stroke="#a0a0a0"/><ellipse cx="554" cy="46" rx="2.5" ry="7" fill="#c8c8c8" stroke="#999"/><rect x="537" y="43.5" width="7" height="6" rx="1.5" fill="#e07828"/><path d="M543 50 L545 56" stroke="#bbb" stroke-width="2"/><rect x="563.5" y="36" width="1.6" height="24" fill="#222"/><rect x="695" y="36" width="1.6" height="24" fill="#222"/><rect x="810" y="36" width="1.6" height="24" fill="#222"/><rect x="872.5" y="36" width="1.6" height="24" fill="#222"/><rect x="993.5" y="36" width="1.6" height="24" fill="#222"/><path d="M575.0 56.5 Q575.0 49.5 584.5 49.5 Q594.0 49.5 594.0 56.5 Z" fill="#8aa2d4"/><path d="M578.2 51 Q576.7 44 579.0 38.5 Q584.5 34 590.0 38.5 Q592.3 44 590.8 51 Z" fill="#8a5a30"/><ellipse cx="584.5" cy="44" rx="3.6" ry="4.4" fill="#d0a070"/><path d="M581.7 49.6 L584.5 52 L587.3 49.6 Z" fill="#f4f4f4"/><path d="M587.5 51.5 H590.5 V48.5 H592.8 V51.5 H595.8 V53.8 H592.8 V56.8 H590.5 V53.8 H587.5 Z" fill="#e02828"/><path d="M608.5 56.5 Q608.5 49.5 618 49.5 Q627.5 49.5 627.5 56.5 Z" fill="#8aa2d4"/><path d="M611.7 51 Q610.2 44 612.5 38.5 Q618 34 623.5 38.5 Q625.8 44 624.3 51 Z" fill="#8a5a30"/><ellipse cx="618" cy="44" rx="3.6" ry="4.4" fill="#d0a070"/><path d="M615.2 49.6 L618 52 L620.8 49.6 Z" fill="#f4f4f4"/><g transform="translate(646,47) rotate(-35)"><rect x="-10" y="-5.5" width="20" height="11" fill="#90c878" stroke="#60a050" stroke-width="0.8"/><rect x="-11" y="-2" width="20" height="10" fill="#a8d890" stroke="#60a050" stroke-width="0.8"/><circle cx="-1" cy="3" r="2.5" fill="none" stroke="#f0fff0" stroke-width="0.8"/></g><circle cx="673" cy="41" r="4" fill="#e8c0a0"/><path d="M669 39 Q673 34 677 39" fill="#222"/><path d="M667 56 Q667 47 673 47 Q679 47 679 56 Z" fill="#222"/><circle cx="683" cy="43" r="3.8" fill="#e8c0a0"/><path d="M679 43 Q683 35 687 43 L687 48 L679 48 Z" fill="#4a2a2a" opacity="0.9"/><path d="M678 57 Q678 49 683 49 Q688 49 688 57 Z" fill="#d030a0"/><circle cx="677.5" cy="49" r="2.5" fill="#e8c0a0"/><path d="M674 57 Q674 52 677.5 52 Q681 52 681 57 Z" fill="#e8d040"/><path d="M700 45 Q700 37 710 37 Q720 37 720 45 Z" fill="#d8a858"/><rect x="700" y="45" width="20" height="2.2" fill="#c03020"/><rect x="699.5" y="47" width="21" height="1.8" fill="#60a030"/><rect x="700" y="48.8" width="20" height="3.5" rx="1.5" fill="#d8b070"/><rect x="729" y="36.5" width="17.5" height="20.5" rx="1.5" fill="#6a8ac8" stroke="#3a5a98"/><rect x="744" y="37" width="2.5" height="19.5" fill="#4a6aa8"/><rect x="733" y="42" width="8" height="1.4" fill="#d8e4f8"/><path d="M758 53 Q762 50 763 44 Q765 38 771 37 Q776 40 775 46 Q773 52 776 56 Z" fill="#d8b850" stroke="#a88830" stroke-width="0.8"/><circle cx="772" cy="36.5" r="1.8" fill="#c8a840"/><circle cx="767" cy="55" r="1.8" fill="#a88830"/><rect x="786.5" y="37" width="15" height="15" fill="#f8e8a0" stroke="#c8b880"/><rect x="787" y="37.5" width="14" height="3" fill="#f0d070"/><path d="M792 48 H799 V44.5 L805.5 50 L799 55.5 V52 H792 Z" fill="#70b040" stroke="#508a30" stroke-width="0.7"/><circle cx="826" cy="41" r="4.5" fill="#3a3a3a"/><path d="M816.5 57 Q816.5 47 826 47 Q835.5 47 835.5 57 Z" fill="#3a3a3a"/><path d="M824.5 47 L826 55 L827.5 47 Z" fill="#d02020"/><path d="M823 47 L826 50 L829 47" fill="#fff"/><circle cx="849" cy="38.5" r="3" fill="#e8d070"/><circle cx="861" cy="38.5" r="3" fill="#e8d070"/><circle cx="855" cy="47" r="9" fill="#a8c0e8" stroke="#6a8ac8" stroke-width="1.2"/><circle cx="855" cy="47" r="6.3" fill="#f4f8ff"/><path d="M855 42.5 V47 L858 49" stroke="#445" stroke-width="1.3" fill="none"/><rect x="880" y="37.5" width="18" height="18" fill="#f4f6fc" stroke="#8aa0d0"/><rect x="880.5" y="38" width="17" height="3" fill="#b8c8e8"/><path d="M880 45 H898 M880 48.5 H898 M880 52 H898 M886 41 V55 M892 41 V55" stroke="#98acd8" stroke-width="0.8"/><rect x="906.5" y="41" width="21.5" height="11.5" fill="#90c030" stroke="#333" stroke-width="0.8"/><rect x="908" y="42.5" width="18.5" height="4" fill="#d8e040"/><path d="M940 41 L942 35.5 H951 L953 41 Z" fill="#c8d8f0" stroke="#8aa"/><rect x="936.5" y="41" width="20" height="15" fill="#e8c050" stroke="#907020"/><rect x="939" y="49" width="15" height="1.5" fill="#706030"/><rect x="963.5" y="36.5" width="22" height="20" fill="#4a50c8" stroke="#3a3a98"/><text x="974.5" y="51" font-family="Liberation Sans" font-weight="bold" font-size="10.5" fill="#e8ecff" text-anchor="middle">A/P</text><path d="M999 37 H1014 L1019.5 42.5 V57 H999 Z" fill="#f8f8f8" stroke="#b8b8b8"/><path d="M1001 54 Q1006 46 1008 38 Q1010 46 1017 52 Q1008 50 1001 54 Z" fill="none" stroke="#d83030" stroke-width="1.6"/><path d="M1027 50 L1033 42 H1046 L1048 50 V56 H1027 Z" fill="#707870" stroke="#404840" stroke-width="0.8"/><rect x="1038" y="36.5" width="9.5" height="7" fill="#6a7a6a" stroke="#404840" stroke-width="0.6"/><rect x="1039.5" y="38" width="6.5" height="3.5" fill="#58c058"/><rect x="1030" y="51" width="15" height="3" fill="#9aa49a"/><circle cx="1066.3" cy="47" r="9.5" fill="#8aaee0" stroke="#c8d8f0" stroke-width="1.3"/><circle cx="1066.3" cy="47" r="7" fill="#6a94d8"/><text x="1066.3" y="51.8" font-family="Liberation Sans" font-weight="bold" font-size="12" fill="#fff" text-anchor="middle">?</text><circle cx="1093" cy="47" r="9.3" fill="#fff" stroke="#a86060" stroke-width="2.6"/><rect x="1091.8" y="40" width="2.6" height="8" fill="#a86060"/><circle cx="1093" cy="51.5" r="1.5" fill="#a86060"/></svg>
<svg width="1788" height="999"><path d="M186.5 96.5 L186.5 112 L190 108.5 L193.5 115.5 L196 114 L192.5 107.5 L197.5 107 Z" fill="#e8e8f0" stroke="#b8bcc8" stroke-width="0.7"/><rect x="268.5" y="99.5" width="19.5" height="14" fill="#8cc070" stroke="#c4c0a8" stroke-width="1"/><path d="M283 110.5 L287 113.5" stroke="#e0d0a8" stroke-width="1.4"/><path d="M376.5 100 Q381 98 385.5 100 Q390 98 394.5 100 V113 Q390 111 385.5 113 Q381 111 376.5 113 Z" fill="#f0f0ea" stroke="#6a7aa8" stroke-width="1"/><path d="M385.5 100 V113" stroke="#6a7aa8"/><path d="M377 113.5 H395" stroke="#1a2a58" stroke-width="1.5"/><rect x="499.5" y="96" width="8" height="20" fill="#d04848"/><rect x="502" y="98" width="3" height="16" fill="#4a40c8"/><rect x="510" y="96" width="8.5" height="20" fill="#d8c840"/><rect x="512.5" y="98" width="3.5" height="16" fill="#80b840"/><rect x="499" y="114.5" width="8.5" height="2" fill="#e8e8e0"/><rect x="509.5" y="114.5" width="9.5" height="2" fill="#e8e8e0"/><text x="621.5" y="112" font-family="Liberation Sans" font-weight="bold" font-size="14.5" fill="#dce040" stroke="#dce040" stroke-width="0.8">A+</text><rect x="738.5" y="97.8" width="19" height="5" rx="2.2" fill="#c8d2f4" stroke="#7a88b8" stroke-width="0.8"/><path d="M742 103 H754 L756.5 115 H739.5 Z" fill="#b4c0e6" stroke="#6a78a8" stroke-width="0.8"/><rect x="744" y="105" width="7.5" height="5" fill="#fafcff"/><rect x="888" y="96.5" width="18.5" height="19.5" rx="1" fill="#e0e0e8" stroke="#c8c8d0" stroke-width="0.8"/><path d="M889 99 V114" stroke="#b0b0b8" stroke-width="2" stroke-dasharray="1.2 1.2"/><rect x="892" y="100" width="11" height="4" fill="#a8a8b8"/><ellipse cx="984" cy="100.5" rx="6" ry="2.8" fill="#c8904a"/><path d="M989 98 H994 V110 H991 V116 H989.5 V111 L983 111 V116 H981.5 V108 L989 107 Z" fill="#7a5232"/><rect x="983" y="101" width="2" height="8" fill="#8a6040"/><circle cx="1109.5" cy="102" r="4.8" fill="#c8a890"/><path d="M1104.5 100 Q1109.5 94 1114.5 100" fill="#7a4a2a"/><path d="M1100 115 Q1100 107 1109.5 107 Q1119 107 1119 115 Z" fill="#8a7a6a"/><path d="M1106 106 Q1109.5 110 1113 106" stroke="#5a4a3a" fill="#6a5a4a"/><path d="M1194 100 Q1194 96 1202 96 Q1211 96 1211 100 Q1211 104 1202 104 Q1194 104 1194 100 Z" fill="#fff" stroke="#1a1a3a" stroke-width="1.2"/><path d="M1193 109 Q1193 105 1201 105 Q1209 105 1209 109 Q1209 113 1201 113 L1196 116 L1197 113 Q1193 112 1193 109 Z" fill="#d04a3a" stroke="#1a1a3a" stroke-width="1.2"/></svg>
<svg width="1788" height="999"><g transform="translate(170,30.7) rotate(45)"><ellipse rx="22.5" ry="19.5" fill="none" stroke="#4a6aae" stroke-width="2.6" stroke-dasharray="108.7 16 7.9 0"/><ellipse cx="-1" cy="-1" rx="19" ry="15.5" fill="none" stroke="#6c8cc6" stroke-width="1.3" stroke-dasharray="0 6.35 43.9 58.7"/></g><circle cx="169.6" cy="30" r="13.8" fill="#a52a2a"/><text x="162" y="34.7" font-family="Liberation Serif" font-style="italic" font-weight="bold" font-size="23" fill="#fff">P</text><text x="164.5" y="40.8" font-family="Liberation Serif" font-style="italic" font-weight="bold" font-size="21" fill="#4a6aae">S</text><text x="185" y="38.3" font-family="Liberation Sans" font-style="italic" font-weight="bold" font-size="16" fill="#4a6aa8" stroke="#4a6aa8" stroke-width="0.5" textLength="44" lengthAdjust="spacingAndGlyphs">P<tspan font-size="11">RAXI</tspan></text><text x="229.5" y="38.3" font-family="Liberation Sans" font-style="italic" font-weight="bold" font-size="16" fill="#a02838" stroke="#a02838" stroke-width="0.5" textLength="60" lengthAdjust="spacingAndGlyphs">S<tspan font-size="11">CHOOL</tspan></text><text x="290" y="30" font-family="Liberation Sans" font-size="5" fill="#c8c8d0">TM</text></svg>
<div class="t" style="left:209.00px;top:47.60px;font-size:13px;color:#4f6eac;font-weight:bold;transform:scaleX(1.0413);">School 1001</div>
<div class="a" style="left:870px;top:42px;width:139px;height:139px;border-radius:50%;border:7px solid #f6913a;background:rgba(246,146,64,0.5)"></div>
</body></html>
